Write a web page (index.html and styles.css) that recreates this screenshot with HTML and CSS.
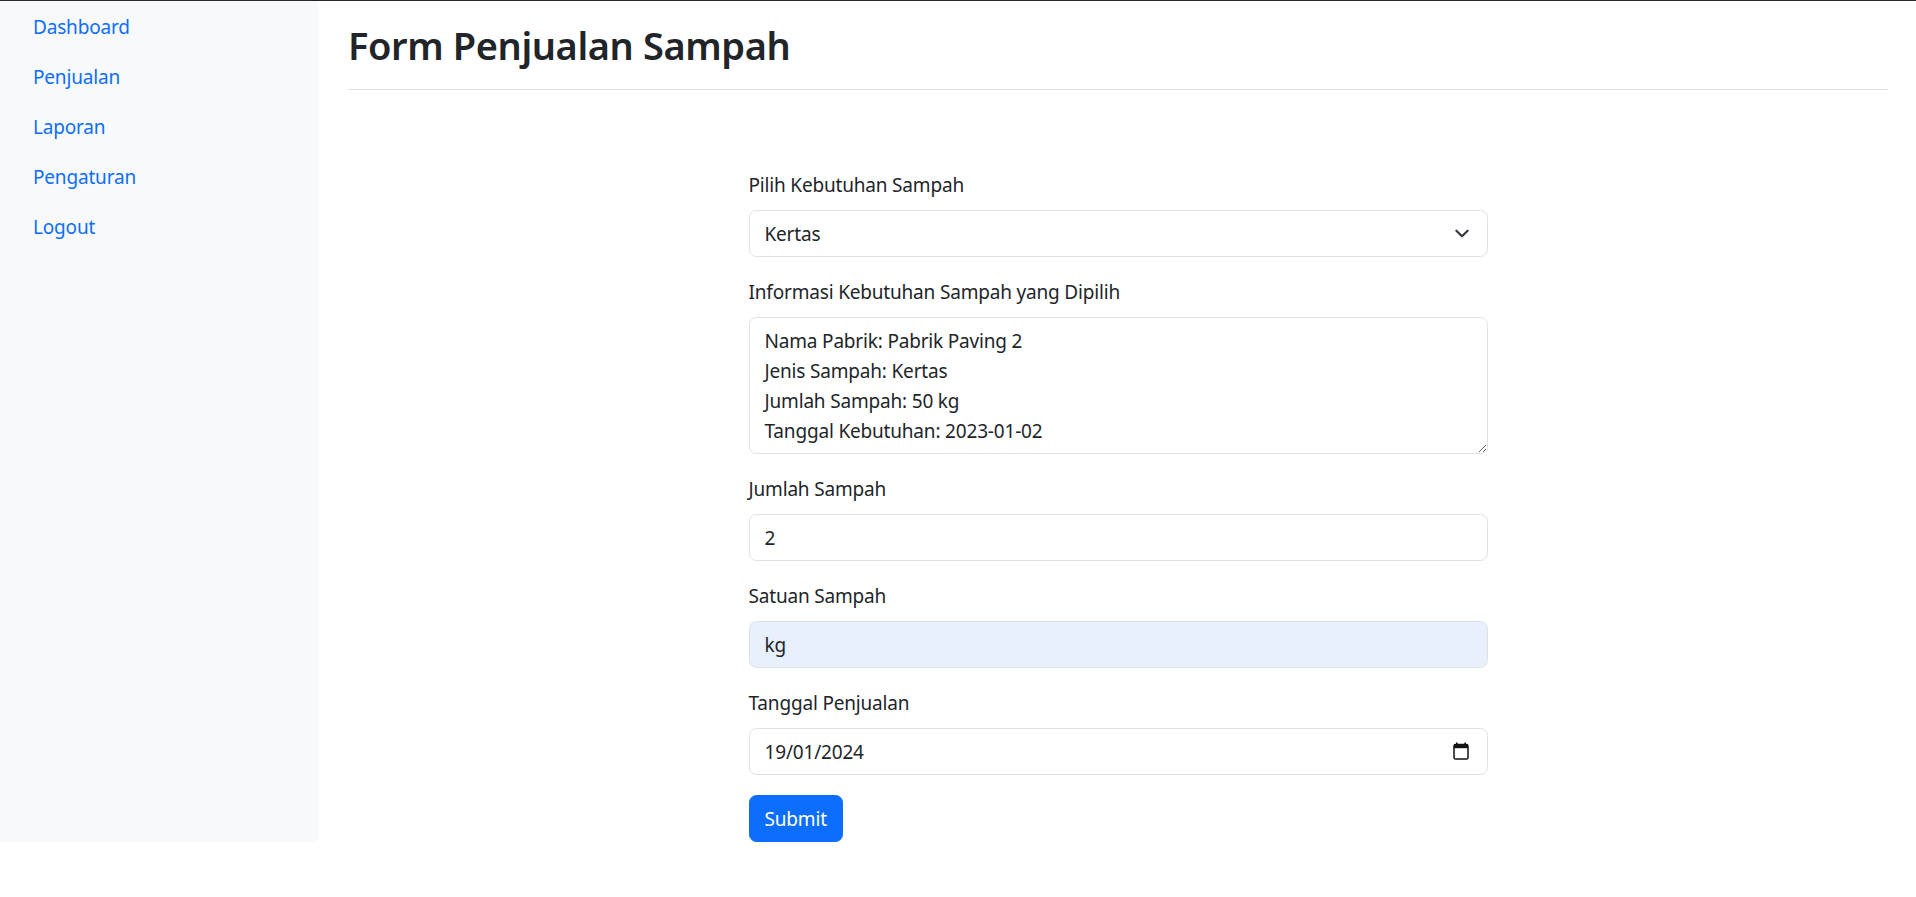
FILE: index.html
```html
<!DOCTYPE html>
<html lang="id">
<head>
<meta charset="utf-8">
<title>Form Penjualan Sampah</title>
<link rel="stylesheet" href="styles.css">
</head>
<body>
<div class="topbar"></div>
<div class="layout">
  <nav class="sidebar">
    <ul class="nav">
      <li><a class="nav-link" href="#">Dashboard</a></li>
      <li><a class="nav-link" href="#">Penjualan</a></li>
      <li><a class="nav-link" href="#">Laporan</a></li>
      <li><a class="nav-link" href="#">Pengaturan</a></li>
      <li><a class="nav-link" href="#">Logout</a></li>
    </ul>
  </nav>
  <main class="main">
    <div class="page-header">
      <h1 class="page-title">Form Penjualan Sampah</h1>
    </div>
    <form class="sale-form">
      <div class="field">
        <label class="form-label" for="kebutuhan">Pilih Kebutuhan Sampah</label>
        <select class="form-control form-select" id="kebutuhan">
          <option>Kertas</option>
        </select>
      </div>
      <div class="field">
        <label class="form-label" for="info">Informasi Kebutuhan Sampah yang Dipilih</label>
        <textarea class="form-control info-area" id="info" rows="4">Nama Pabrik: Pabrik Paving 2
Jenis Sampah: Kertas
Jumlah Sampah: 50 kg
Tanggal Kebutuhan: 2023-01-02</textarea>
      </div>
      <div class="field">
        <label class="form-label" for="jumlah">Jumlah Sampah</label>
        <input class="form-control" id="jumlah" type="text" value="2">
      </div>
      <div class="field">
        <label class="form-label" for="satuan">Satuan Sampah</label>
        <input class="form-control form-autofill" id="satuan" type="text" value="kg">
      </div>
      <div class="field">
        <label class="form-label" for="tanggal">Tanggal Penjualan</label>
        <div class="date-wrap">
          <input class="form-control" id="tanggal" type="text" value="19/01/2024">
          <svg class="cal-icon" width="16" height="18" viewBox="0 0 16 18" aria-hidden="true">
            <rect x="3" y="0.5" width="1.6" height="3" fill="#111"/>
            <rect x="11.4" y="0.5" width="1.6" height="3" fill="#111"/>
            <rect x="1" y="2.6" width="14" height="14.4" rx="1.6" fill="none" stroke="#111" stroke-width="1.5"/>
            <rect x="1" y="2.6" width="14" height="3.6" fill="#111"/>
          </svg>
        </div>
      </div>
      <button class="btn-primary" type="button">Submit</button>
    </form>
  </main>
</div>
</body>
</html>
```

FILE: styles.css
```css
html, body {
  margin: 0;
  padding: 0;
}

body {
  font-family: "Noto Sans", "Open Sans", "DejaVu Sans", sans-serif;
  font-size: 19px;
  letter-spacing: -0.18px;
  line-height: 30px;
  color: #212529;
  background: #ffffff;
}

.topbar {
  height: 1px;
  background: #24272c;
}

.layout {
  display: flex;
  align-items: stretch;
}

.sidebar {
  flex: 0 0 318px;
  background: #f8f9fa;
  padding-left: 13px;
  padding-top: 1px;
  box-sizing: border-box;
}

.nav {
  list-style: none;
  margin: 0;
  padding: 0;
  display: flex;
  flex-direction: column;
}

.nav-link {
  display: block;
  padding: 10px 20px;
  color: #0d6efd;
  text-decoration: none;
}

.main {
  flex: 1 1 auto;
  padding: 0 28px 0 30px;
  min-width: 0;
}

.page-header {
  padding: 20px 0 10px;
  border-bottom: 1px solid #dee2e6;
}

.page-title {
  margin: 0 0 10px;
  font-size: 38px;
  letter-spacing: -0.4px;
  line-height: 48px;
  font-weight: 600;
  color: #212529;
}

.sale-form {
  width: 739px;
  margin: 0 auto;
  padding-top: 80px;
}

.field {
  margin-bottom: 20px;
}

.form-label {
  display: block;
  margin-bottom: 10px;
}

.form-control {
  display: block;
  width: 100%;
  box-sizing: border-box;
  height: 47px;
  padding: 7.5px 15px;
  margin: 0;
  font-family: inherit;
  font-size: 19px;
  letter-spacing: -0.18px;
  line-height: 30px;
  color: #212529;
  background-color: #ffffff;
  border: 1px solid #dee2e6;
  border-radius: 7.5px;
  outline: none;
}

.form-select {
  appearance: none;
  -webkit-appearance: none;
  padding-right: 50px;
  background-image: url("data:image/svg+xml,%3csvg xmlns='http://www.w3.org/2000/svg' viewBox='0 0 16 16'%3e%3cpath fill='none' stroke='%23343a40' stroke-linecap='round' stroke-linejoin='round' stroke-width='2.4' d='m2 5 6 6 6-6'/%3e%3c/svg%3e");
  background-repeat: no-repeat;
  background-position: right 15px center;
  background-size: 20px 15px;
}

.info-area {
  height: 137px;
  resize: vertical;
  overflow: hidden;
}

.form-autofill {
  background-color: #e8f0fe;
}

.date-wrap {
  position: relative;
}

.cal-icon {
  position: absolute;
  right: 19px;
  top: 14px;
}

.btn-primary {
  display: inline-block;
  padding: 7.5px 15px;
  font-family: inherit;
  font-size: 19px;
  letter-spacing: -0.18px;
  line-height: 30px;
  color: #ffffff;
  background: #0d6efd;
  border: 1px solid #0d6efd;
  border-radius: 7.5px;
  cursor: pointer;
}
```
